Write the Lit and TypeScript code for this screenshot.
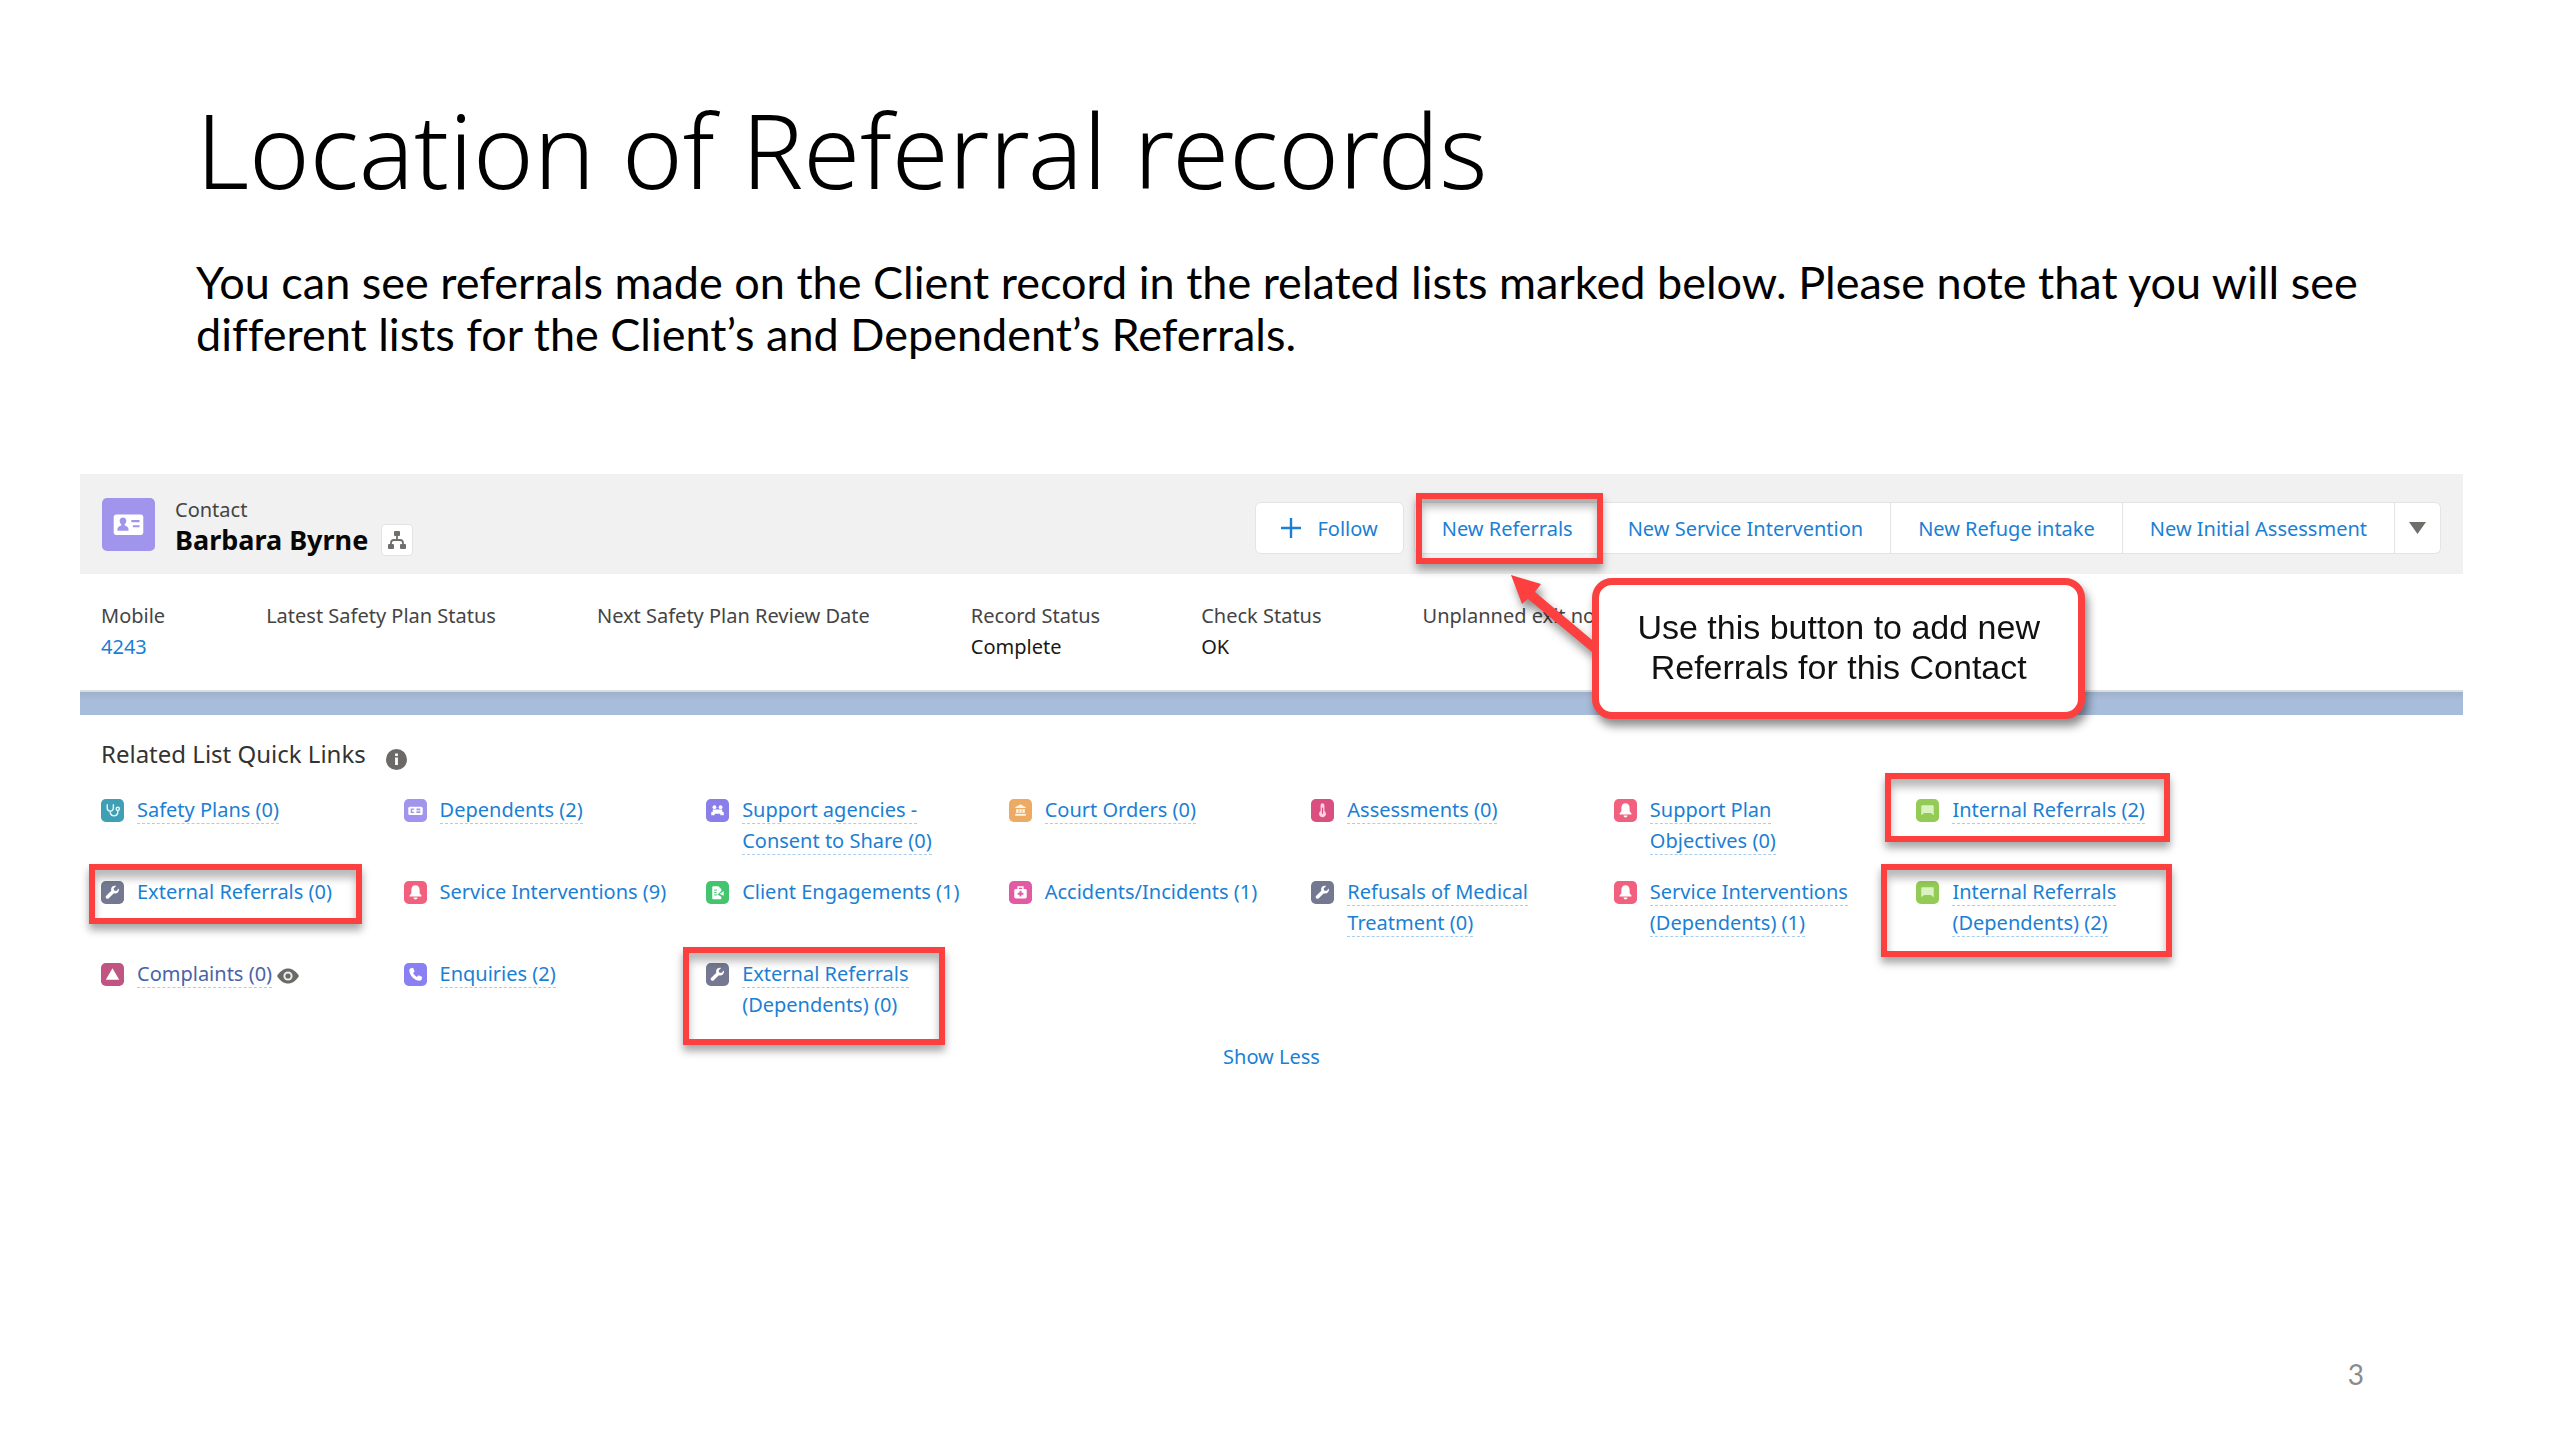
import { LitElement, html, svg, css, nothing, type SVGTemplateResult } from "lit";
import { customElement } from "lit/decorators.js";
import { classMap } from "lit/directives/class-map.js";

interface QuickLink {
  lines: string[];
  underlined: number;
  icon: string;
  mark?: string;
  visited?: boolean;
}

const card = svg`<path fill="#fff" fill-rule="evenodd" d="M6.5 7.5h11a1.2 1.2 0 0 1 1.2 1.2v6.8a1.2 1.2 0 0 1-1.2 1.2h-11a1.2 1.2 0 0 1-1.2-1.2V8.700a1.200 1.200 0 0 1 1.200-1.200zM7 14.800h5v-.8c0-.8-1-1.200-1.700-1.500v-.6c.5-.4.700-1 .700-1.600 0-.9-.6-1.500-1.500-1.500S8 9.400 8 10.300c0 .6.200 1.200.7 1.600v.6C8 12.800 7 13.200 7 14zM13.300 10v1h3.700v-1zM14 12.300v1h3v-1z"/>`;
const wrench = svg`<path fill="#fff" d="M18.600 7.900 16 10.400l-2.300-.5-.5-2.200 2.600-2.600c-2-.6-4.200.2-5 2.100-.4 1-.4 2 0 3l-5.300 5.300c-.8.800-.8 1.900 0 2.600s1.900.7 2.600 0l5.300-5.300c1.400.5 3 .200 4.200-.900 1-1.100 1.400-2.600 1-4z"/>`;
const bell = svg`<path fill="#fff" d="M12 4.500c-2.700 0-4.300 2-4.300 4.500v3.700L5.800 15.200v1h12.400v-1l-1.900-2.500V9c0-2.500-1.600-4.500-4.300-4.500zM10 17.200h4c0 1.200-.8 2-2 2s-2-.8-2-2z"/>`;
const chat = svg`<path fill="#d9f3c0" d="M6.500 6.500h11a1 1 0 0 1 1 1v9.500l-3-2.500h-7L5.500 17V7.500a1 1 0 0 1 1-1z"/>`;

const ICONS: Record<string, { color: string; art: SVGTemplateResult }> = {
  plan: {
    color: "#3f9fb5",
    art: svg`<g fill="none" stroke="#e3f7fa" stroke-width="1.500" stroke-linecap="round"><path d="M6.500 6v3.500a3.200 3.200 0 0 0 6.400 0V6M9.700 12.700v1.800a4 4 0 0 0 7.800 0v-2.300"/><circle cx="17.500" cy="10.300" r="1.700"/></g>`,
  },
  card: {
    color: "#a094ed",
    art: svg`<rect x="4.500" y="8" width="15" height="8.600" rx="1.600" fill="#fff"/><path fill="#a094ed" d="M7 10h3.600v1.200H8.500v2.200h2.100v1.200H7zM13 10h4v4.600h-4z"/><path stroke="#fff" stroke-width="1" d="M12.500 12.300H17.500"/>`,
  },
  agency: {
    color: "#8a7fe8",
    art: svg`<g fill="#fff"><circle cx="8.800" cy="8.500" r="2"/><circle cx="15.200" cy="8.500" r="2"/><path d="M7 11h10v2.500h1.500V17H15v-1.500H9V17H5.500v-3.500H7z"/></g>`,
  },
  court: {
    color: "#ecaa62",
    art: svg`<g fill="#fff3e0"><path d="M12 5.500 17.500 8.500v1h-11v-1z"/><path d="M7.500 10.500h9v4h-9z"/><rect x="6.500" y="15.500" width="11" height="2"/></g><path stroke="#ecaa62" stroke-width=".8" d="M10.400 10.500v4M13.600 10.500v4"/>`,
  },
  assess: {
    color: "#db4f80",
    art: svg`<path fill="#fbd3e1" d="M10 6.500a2 2 0 0 1 4 0v6a3.600 3.600 0 1 1-4 0z"/><path stroke="#db4f80" stroke-width="1.200" d="M12 9v6.500"/>`,
  },
  bell: { color: "#f1607f", art: bell },
  chat: { color: "#94cb57", art: chat },
  wrench: { color: "#747991", art: wrench },
  engage: {
    color: "#45c46f",
    art: svg`<path fill="#fff" d="M7.500 5.500h5.500l3 3v2l-4 3.500 4 2.500v1.500a1 1 0 0 1-1 1H7.500a1 1 0 0 1-1-1V6.500a1 1 0 0 1 1-1z"/><path fill="#e8fbee" d="m14 13.500 4.500-3v5z"/><path stroke="#45c46f" stroke-width="1" d="M8.500 9.500h3M8.500 12h2.500M8.500 14.500h3"/>`,
  },
  incident: {
    color: "#e25aa3",
    art: svg`<path fill="none" stroke="#fff" stroke-width="1.500" d="M9.500 8.500V6.300h5v2.200"/><rect x="5.500" y="8.300" width="13" height="10" rx="1.500" fill="#fff"/><path stroke="#e25aa3" stroke-width="2" d="M12 10.300v6M9 13.300h6"/>`,
  },
  complaint: { color: "#bf5580", art: svg`<path fill="#fff" d="M12 5.500 19 17.500H5z"/>` },
  phone: {
    color: "#8a80f2",
    art: svg`<path fill="#fff" d="M7.300 5.500 9.500 5l1.600 3.800-1.600 1.700c.8 1.700 2.200 3.100 4 4l1.700-1.600 3.800 1.600-.5 2.200c-.3 1.200-1.200 1.800-2.300 1.800C10.800 18 6 13.200 5.500 7.800c0-1.100.7-2 1.800-2.300z"/>`,
  },
};

const LINKS: QuickLink[] = [
  { lines: ["Safety Plans (0)"], underlined: 1, icon: "plan" },
  { lines: ["Dependents (2)"], underlined: 1, icon: "card" },
  { lines: ["Support agencies -", "Consent to Share (0)"], underlined: 2, icon: "agency" },
  { lines: ["Court Orders (0)"], underlined: 1, icon: "court" },
  { lines: ["Assessments (0)"], underlined: 1, icon: "assess" },
  { lines: ["Support Plan", "Objectives (0)"], underlined: 2, icon: "bell" },
  { lines: ["Internal Referrals (2)"], underlined: 1, icon: "chat", mark: "mark-internal" },
  { lines: ["External Referrals (0)"], underlined: 0, icon: "wrench", mark: "mark-external" },
  { lines: ["Service Interventions (9)"], underlined: 0, icon: "bell" },
  { lines: ["Client Engagements (1)"], underlined: 0, icon: "engage" },
  { lines: ["Accidents/Incidents (1)"], underlined: 0, icon: "incident" },
  { lines: ["Refusals of Medical", "Treatment (0)"], underlined: 2, icon: "wrench" },
  { lines: ["Service Interventions", "(Dependents) (1)"], underlined: 2, icon: "bell" },
  { lines: ["Internal Referrals", "(Dependents) (2)"], underlined: 2, icon: "chat", mark: "mark-internal-dep" },
  { lines: ["Complaints (0)"], underlined: 1, icon: "complaint", visited: true },
  { lines: ["Enquiries (2)"], underlined: 1, icon: "phone" },
  { lines: ["External Referrals", "(Dependents) (0)"], underlined: 1, icon: "wrench", mark: "mark-external-dep" },
];

const FIELDS: { label: string; value?: string; link?: boolean }[] = [
  { label: "Mobile", value: "4243", link: true },
  { label: "Latest Safety Plan Status" },
  { label: "Next Safety Plan Review Date" },
  { label: "Record Status", value: "Complete" },
  { label: "Check Status", value: "OK" },
  { label: "Unplanned exit notes" },
];

@customElement("record-header")
class RecordHeader extends LitElement {
  static styles = css`
    :host {
      display: block;
    }
    .bar {
      display: flex;
      align-items: center;
      gap: 20px;
      box-sizing: border-box;
      min-height: 100px;
      padding: 0 22px;
      background: #f1f1f1;
    }
    .avatar {
      width: 53px;
      height: 53px;
    }
    .who {
      padding-top: 4px;
    }
    .kind {
      margin: 0;
      font-size: 20px;
      line-height: 28px;
      color: #444;
    }
    .name-row {
      display: flex;
      align-items: center;
      gap: 13px;
    }
    .name {
      margin: 0;
      font-size: 27px;
      line-height: 32px;
      font-weight: 700;
      color: #080707;
    }
    .tree {
      display: flex;
      width: 32px;
      height: 32px;
      padding: 0;
      align-items: center;
      justify-content: center;
      background: #fff;
      border: 1px solid #e3e3e3;
      border-radius: 4px;
    }
    .actions {
      display: flex;
      gap: 10px;
      margin-left: auto;
      padding-top: 8px;
    }
    .group {
      display: flex;
    }
    .action {
      position: relative;
      display: flex;
      align-items: center;
      justify-content: center;
      gap: 16px;
      height: 52px;
      padding: 0 27px;
      font: inherit;
      font-size: 20px;
      color: #1b7fd4;
      background: #fff;
      border: 1px solid #e4e4e4;
      white-space: nowrap;
    }
    .group .action + .action {
      border-left-width: 0;
    }
    .group .action:first-child {
      border-radius: 6px 0 0 6px;
    }
    .group .action:last-child {
      border-radius: 0 6px 6px 0;
      padding: 0 14px;
    }
    .follow {
      padding: 0 25px;
      border-radius: 6px;
    }
    .mark {
      position: absolute;
      inset: -10px -3px -11px 1px;
      z-index: 1;
      border: 6px solid #fc4040;
      box-shadow: 0 6px 8px rgba(0, 0, 0, 0.35), inset 0 8px 8px rgba(0, 0, 0, 0.28);
      pointer-events: none;
    }
  `;

  render() {
    return html`
      <header class="bar">
        <svg class="avatar" viewBox="0 0 24 24" aria-hidden="true">
          <rect width="24" height="24" rx="2.300" fill="#a094ed" />${card}
        </svg>
        <div class="who">
          <p class="kind">Contact</p>
          <div class="name-row">
            <h2 class="name">Barbara Byrne</h2>
            <button class="tree" aria-label="View hierarchy">
              <svg width="20" height="20" viewBox="0 0 20 20" aria-hidden="true">
                <g fill="#706e6b">
                  <rect x="7" y="1" width="6" height="5" rx="1" />
                  <rect x="1" y="14" width="6" height="5" rx="1" />
                  <rect x="13" y="14" width="6" height="5" rx="1" />
                </g>
                <path d="M10 5v5M4 15v-2q0-3 3-3h6q3 0 3 3v2" fill="none" stroke="#706e6b" stroke-width="1.800" />
              </svg>
            </button>
          </div>
        </div>
        <div class="actions">
          <button class="action follow">
            <svg width="20" height="20" viewBox="0 0 20 20" aria-hidden="true">
              <path d="M10 0v20M0 10h20" stroke="#1b7fd4" stroke-width="2.400" />
            </svg>
            Follow
          </button>
          <div class="group">
            <button class="action">New Referrals<span class="mark"></span></button>
            <button class="action">New Service Intervention</button>
            <button class="action">New Refuge intake</button>
            <button class="action">New Initial Assessment</button>
            <button class="action" aria-label="More actions">
              <svg width="17" height="12" viewBox="0 0 17 12" aria-hidden="true">
                <path d="M0 0h17L8.500 12z" fill="#706e6b" />
              </svg>
            </button>
          </div>
        </div>
      </header>
    `;
  }
}

@customElement("quick-links")
class QuickLinks extends LitElement {
  static styles = css`
    :host {
      display: block;
      padding: 21px 0 0 21px;
    }
    .head {
      display: flex;
      align-items: center;
      gap: 20px;
    }
    .title {
      margin: 0;
      font-size: 24px;
      line-height: 36px;
      font-weight: 400;
      color: #333;
    }
    .info {
      margin-top: 10px;
    }
    .list {
      display: grid;
      grid-template-columns: repeat(7, minmax(0, 1fr));
      grid-auto-rows: minmax(62px, auto);
      row-gap: 20px;
      margin: 22px 0 0;
      padding: 0 244px 0 0;
      list-style: none;
    }
    .item {
      position: relative;
      display: flex;
      align-items: flex-start;
      gap: 13px;
    }
    .icon {
      flex: none;
      width: 23px;
      height: 23px;
      margin-top: 5px;
    }
    .link {
      font-size: 20px;
      line-height: 31px;
      color: #1b7fd4;
      text-decoration: none;
      white-space: nowrap;
    }
    .visited {
      color: #4a62a8;
    }
    .dashed {
      border-bottom: 1px dashed #a9cdec;
    }
    .eye {
      margin: 10px 0 0 -8px;
    }
    .more {
      display: block;
      margin: 21px auto 0;
      padding: 0 21px 0 0;
      font: inherit;
      font-size: 20px;
      line-height: 31px;
      color: #1b7fd4;
      background: none;
      border: 0;
    }
    .mark {
      position: absolute;
      box-sizing: border-box;
      border: 6px solid #fc4040;
      box-shadow: 0 6px 8px rgba(0, 0, 0, 0.35), inset 0 8px 8px rgba(0, 0, 0, 0.28);
      pointer-events: none;
    }
    .mark-internal {
      left: -31px;
      top: -21px;
      width: 285px;
      height: 69px;
    }
    .mark-external {
      left: -12px;
      top: -12px;
      width: 273px;
      height: 60px;
    }
    .mark-internal-dep {
      left: -35px;
      top: -12px;
      width: 291px;
      height: 93px;
    }
    .mark-external-dep {
      left: -23px;
      top: -11px;
      width: 262px;
      height: 98px;
    }
  `;

  private item(link: QuickLink) {
    const icon = ICONS[link.icon];
    return html`
      <li class="item">
        <svg class="icon" viewBox="0 0 24 24" aria-hidden="true">
          <rect width="24" height="24" rx="5" fill=${icon.color} />${icon.art}
        </svg>
        <a class=${classMap({ link: true, visited: !!link.visited })} href="#"
          >${link.lines.map(
            (line, i) =>
              html`${i ? html`<br />` : nothing}<span class=${classMap({ dashed: i < link.underlined })}>${line}</span>`,
          )}</a
        >
        ${link.visited
          ? html`<svg class="eye" width="22" height="16" viewBox="0 0 22 16" aria-hidden="true">
              <path d="M0 8C3 3 7 .5 11 .5S19 3 22 8c-3 5-7 7.500-11 7.500S3 13 0 8z" fill="#6b6a66" />
              <circle cx="11" cy="8" r="4.600" fill="#eee" />
              <circle cx="11" cy="8" r="2.600" fill="#6b6a66" />
            </svg>`
          : nothing}
        ${link.mark ? html`<span class=${classMap({ mark: true, [link.mark]: true })}></span>` : nothing}
      </li>
    `;
  }

  render() {
    return html`
      <div class="head">
        <h3 class="title">Related List Quick Links</h3>
        <svg class="info" width="21" height="21" viewBox="0 0 21 21" role="img" aria-label="Info">
          <circle cx="10.500" cy="10.500" r="10.500" fill="#6b6a66" />
          <path d="M10.500 4.500v2.600M10.500 8.600v7.400" stroke="#fff" stroke-width="2.800" />
        </svg>
      </div>
      <ul class="list">
        ${LINKS.map((link) => this.item(link))}
      </ul>
      <button class="more">Show Less</button>
    `;
  }
}

@customElement("call-out")
class CallOut extends LitElement {
  static styles = css`
    :host {
      display: block;
      filter: drop-shadow(3px 7px 5px rgba(0, 0, 0, 0.45));
    }
    .box {
      padding: 22px 38px 25px;
      font: 34px/40px "Liberation Sans", Arial, sans-serif;
      color: #111;
      text-align: center;
      white-space: nowrap;
      background: #fff;
      border: 7px solid #fc4040;
      border-radius: 20px;
    }
    .arrow {
      position: absolute;
      left: -81px;
      top: -3px;
    }
  `;

  render() {
    return html`
      <div class="box">Use this button to add new<br />Referrals for this Contact</div>
      <svg class="arrow" width="88" height="84" viewBox="0 0 88 84" aria-hidden="true">
        <path d="M0 0 30 9 24 17 87 70V82L17 24 11 29z" fill="#fc4040" />
      </svg>
    `;
  }
}

@customElement("app-root")
class AppRoot extends LitElement {
  static styles = css`
    :host {
      display: block;
      color: #000;
      background: #fff;
      font-family: "Noto Sans", "Open Sans", sans-serif;
    }
    .slide {
      display: flex;
      flex-direction: column;
      box-sizing: border-box;
      min-height: 100vh;
      padding: 79px 0 48px;
    }
    .heading {
      margin: 0 196px;
      font-size: 103px;
      line-height: 140px;
      font-weight: 300;
    }
    .lead {
      margin: 37px 196px 0;
      font: 45px/52px Lato, "Noto Sans", sans-serif;
      font-variant-ligatures: none;
    }
    .panel {
      position: relative;
      margin: 114px 97px 0 80px;
    }
    .fields {
      display: flex;
      gap: 101px;
      margin: 0;
      padding: 26px 21px 28px;
      border-bottom: 2px solid #dcdde0;
    }
    .label,
    .value {
      margin: 0;
      font-size: 20px;
      line-height: 31px;
      white-space: nowrap;
      color: #444;
    }
    .value {
      color: #181818;
    }
    .phone {
      color: #1b7fd4;
      text-decoration: none;
    }
    .strip {
      height: 23px;
      background: linear-gradient(#9db1cc, #a8bddb 8px);
    }
    .callout {
      position: absolute;
      right: 378px;
      top: 104px;
    }
    .number {
      margin: auto 196px 0;
      font: 28px/36px Lato, sans-serif;
      color: #8b8b8b;
      text-align: right;
    }
  `;

  render() {
    return html`
      <main class="slide">
        <h1 class="heading">Location of Referral records</h1>
        <p class="lead">
          You can see referrals made on the Client record in the related lists marked below. Please note that you will
          see different lists for the Client’s and Dependent’s Referrals.
        </p>
        <section class="panel">
          <record-header></record-header>
          <dl class="fields">
            ${FIELDS.map(
              (f) => html`<div>
                <dt class="label">${f.label}</dt>
                <dd class="value">${f.link ? html`<a class="phone" href="#">${f.value}</a>` : f.value}</dd>
              </div>`,
            )}
          </dl>
          <div class="strip"></div>
          <quick-links></quick-links>
          <call-out class="callout"></call-out>
        </section>
        <footer class="number">3</footer>
      </main>
    `;
  }
}
